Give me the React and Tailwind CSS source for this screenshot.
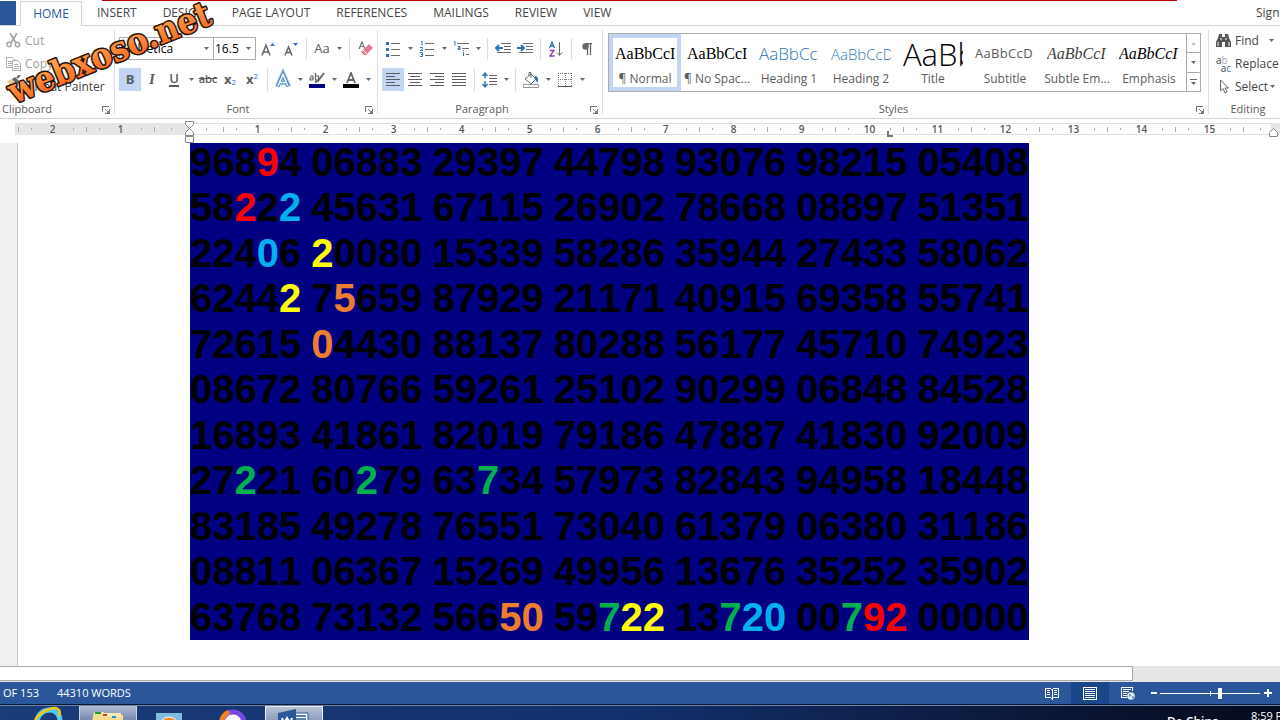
import { useState } from "react";

const tabs = ["INSERT", "DESIGN", "PAGE LAYOUT", "REFERENCES", "MAILINGS", "REVIEW", "VIEW"]

const colors = {
  r: "text-[#ff0000]",
  b: "text-[#00b0f0]",
  y: "text-[#ffff00]",
  o: "text-[#ed7d31]",
  g: "text-[#00b050]",
}

// marks: "group.digit" -> color key
const lines = [
  { text: "96894 06883 29397 44798 93076 98215 05408", marks: { "0.3": "r" } },
  { text: "58222 45631 67115 26902 78668 08897 51351", marks: { "0.2": "r", "0.4": "b" } },
  { text: "22406 20080 15339 58286 35944 27433 58062", marks: { "0.3": "b", "1.0": "y" } },
  { text: "62442 75659 87929 21171 40915 69358 55741", marks: { "0.4": "y", "1.1": "o" } },
  { text: "72615 04430 88137 80288 56177 45710 74923", marks: { "1.0": "o" } },
  { text: "08672 80766 59261 25102 90299 06848 84528", marks: {} },
  { text: "16893 41861 82019 79186 47887 41830 92009", marks: {} },
  { text: "27221 60279 63734 57973 82843 94958 18448", marks: { "0.2": "g", "1.2": "g", "2.2": "g" } },
  { text: "83185 49278 76551 73040 61379 06380 31186", marks: {} },
  { text: "08811 06367 15269 49956 13676 35252 35902", marks: {} },
  {
    text: "63768 73132 56650 59722 13720 00792 00000",
    marks: {
      "2.3": "o", "2.4": "o", "3.2": "g", "3.3": "y", "3.4": "y",
      "4.2": "g", "4.3": "b", "4.4": "b", "5.2": "g", "5.3": "r", "5.4": "r"
    }
  },
]

const styleItems = [
  { name: "¶ Normal", sample: "AaBbCcI", look: "font-['Liberation_Serif',serif] text-[16px] text-black" },
  { name: "¶ No Spac...", sample: "AaBbCcI", look: "font-['Liberation_Serif',serif] text-[16px] text-black" },
  { name: "Heading 1", sample: "AaBbCc", look: "font-['Open_Sans',sans-serif] font-light text-[17px] text-[#2e74b5]" },
  { name: "Heading 2", sample: "AaBbCcD", look: "font-['Open_Sans',sans-serif] font-light text-[15px] text-[#2e74b5]" },
  { name: "Title", sample: "AaBb", look: "font-['Open_Sans',sans-serif] font-light text-[31px] leading-8 text-black" },
  { name: "Subtitle", sample: "AaBbCcD", look: "font-['Open_Sans',sans-serif] tracking-wide text-[13px] text-[#5a5a5a]" },
  { name: "Subtle Em...", sample: "AaBbCcI", look: "font-['Liberation_Serif',serif] italic text-[16px] text-[#404040]" },
  { name: "Emphasis", sample: "AaBbCcI", look: "font-['Liberation_Serif',serif] italic text-[16px] text-black" },
]

function Caret({ className = "" }) {
  return (
    <svg viewBox="0 0 7 4" className={`h-[3px] w-[5px] shrink-0 ${className}`} fill="#6a6a6a">
      <path d="M0 0h7L3.5 4z" />
    </svg>
  )
}

function Tool({ label, className = "w-[22px]", children }) {
  return (
    <button type="button" aria-label={label} className={`flex h-[23px] shrink-0 items-center justify-center ${className}`}>
      {children}
    </button>
  )
}

function Drop({ label }) {
  return <Tool label={label} className="w-3"><Caret /></Tool>
}

function Divider({ className = "mx-1" }) {
  return <div className={`h-[22px] w-px shrink-0 bg-[#dcdcdc] ${className}`} />
}

function Group({ title, launcher, className = "", children }) {
  return (
    <section className={`relative mt-1 mb-1 flex shrink-0 flex-col border-r border-[#dcdcdc] ${className}`}>
      <div className="flex-1">{children}</div>
      <div className="flex h-[10px] items-center justify-center text-[11px] text-[#5c5c5c]">{title}</div>
      {launcher && (
        <button type="button" aria-label={`${title} settings`} className="absolute right-1 bottom-0">
          <svg viewBox="0 0 8 8" className="size-2" fill="none" stroke="#777" shapeRendering="crispEdges">
            <path d="M.5 6V.5H7M3 3l3 3M7.5 3v4.5H3" />
            <path d="M5 7h2V5z" fill="#777" />
          </svg>
        </button>
      )}
    </section>
  )
}

function Lines({ rows }) {
  return (
    <svg viewBox="0 0 14 13" className="h-[13px] w-[14px]" stroke="#5c5c5c" shapeRendering="crispEdges">
      {rows.map(([a, b], i) => <path key={i} d={`M${a} ${i * 3 - 0.5 + 1}H${b}`} />)}
    </svg>
  )
}

function Clipboard() {
  return (
    <Group title={<span className="mr-auto ml-0.5">Clipboard</span>} launcher className="w-[115px]">
      <div className="-mt-px flex flex-col text-xs">
        <button type="button" className="flex h-[23px] items-center gap-1 pl-1.5 text-[#a0a0a0]">
          <svg viewBox="0 0 15 15" className="size-[15px]" fill="none" stroke="#a6a6a6" strokeWidth="1.8">
            <path d="M4 0l6 10M11 0L5 10" />
            <circle cx="3" cy="11.5" r="2.2" strokeWidth="1.4" />
            <circle cx="11.5" cy="11.5" r="2.2" strokeWidth="1.4" />
          </svg>
          Cut
        </button>
        <button type="button" className="flex h-[23px] items-center gap-1 pl-1.5 text-[#a0a0a0]">
          <svg viewBox="0 0 15 14" className="h-[14px] w-[15px]" fill="#fff" stroke="#b4aeb4" shapeRendering="crispEdges">
            <path d="M.5.5h6l2 2v8h-8zM2 4.5h4M2 6.5h4M2 8.5h4" />
            <path d="M6.500 3.500h5l3 3v7h-8zM8 7.500h4M8 9.500h5M8 11.500h5" />
          </svg>
          Copy
        </button>
        <button type="button" className="flex h-[23px] items-center gap-1 pl-1.5 text-[#444]">
          <svg viewBox="0 0 15 15" className="size-[15px] -translate-y-1">
            <path d="M1 6l5-2 4 5-4 4z" fill="#efc882" />
            <path d="M6 4l3-2 5 5-3 3z" fill="#666" />
            <path d="M11 3l3-3" stroke="#666" strokeWidth="2" />
          </svg>
          <span className="-ml-1 whitespace-nowrap">Format Painter</span>
        </button>
      </div>
    </Group>
  )
}

function FontGroup() {
  return (
    <Group title="Font" launcher className="w-[263px] pr-4">
      <div className="flex flex-col gap-2 pt-[7px] pl-1 text-[#5c5c5c]">
        <div className="flex items-center">
          <div className="relative flex items-center">
            <select aria-label="Font" className="h-[23px] w-[95px] appearance-none border border-[#ababab] bg-white pl-0.5 text-xs text-black">
              <option>Helvetica</option>
            </select>
            <Caret className="pointer-events-none absolute right-[5px]" />
          </div>
          <div className="relative -ml-px flex items-center">
            <select aria-label="Font size" className="h-[23px] w-[43px] appearance-none border border-[#ababab] bg-white pl-px text-xs text-black">
              <option>16.5</option>
            </select>
            <Caret className="pointer-events-none absolute right-[5px]" />
          </div>
          <Tool label="Grow font" className="w-6">
            <svg viewBox="0 0 14 14" className="size-[14px]" fill="none" stroke="#666" strokeWidth="1.5">
              <path d="M1 13.500L5 3l4 10.500M2.500 10h5" />
              <path d="M9 4l2.500-3L14 4z" fill="#2e74b5" stroke="none" />
            </svg>
          </Tool>
          <Tool label="Shrink font">
            <svg viewBox="0 0 14 14" className="size-[14px]" fill="none" stroke="#666" strokeWidth="1.5">
              <path d="M1 13.500L4.500 5 8 13.500M2.500 10.500h4" />
              <path d="M9 1l2.500 3L14 1z" fill="#2e74b5" stroke="none" />
            </svg>
          </Tool>
          <Divider />
          <Tool label="Change case"><span className="text-[13px]">Aa</span></Tool>
          <Drop label="Change case options" />
          <Divider />
          <Tool label="Clear formatting">
            <svg viewBox="0 0 15 15" className="size-[15px]">
              <path d="M1 8L4 1l3 7M2 5.500h4" stroke="#777" strokeWidth="1.200" fill="none" />
              <path d="M3 11l8-8 4 4-7 7H6z" fill="#e8798f" />
              <path d="M5 9l4 4" stroke="#fff" />
            </svg>
          </Tool>
        </div>
        <div className="flex items-center text-[13px]">
          <Tool label="Bold" className="w-[22px] bg-[#c2d5f2]"><b>B</b></Tool>
          <Tool label="Italic"><span className="font-['Liberation_Serif',serif] text-[15px] font-bold italic">I</span></Tool>
          <Tool label="Underline"><span className="border-b-2 border-[#5c5c5c] leading-[13px] font-semibold">U</span></Tool>
          <Drop label="Underline options" />
          <Tool label="Strikethrough"><span className="text-[11px] font-semibold line-through">abc</span></Tool>
          <Tool label="Subscript"><b>x</b><sub className="text-[8px] text-[#2e74b5]">2</sub></Tool>
          <Tool label="Superscript"><b>x</b><sup className="text-[8px] text-[#2e74b5]">2</sup></Tool>
          <Divider />
          <Tool label="Text effects">
            <svg viewBox="0 0 14 14" className="size-[14px] overflow-visible" fill="none">
              <path d="M1.500 13.500L7 1l5.500 12.500M4 9.500h6" stroke="#b9d3ef" strokeWidth="5.500" />
              <path d="M1.500 13.500L7 1l5.500 12.500M4 9.500h6" stroke="#4a86c4" strokeWidth="3.500" />
              <path d="M2 13L7 1.500 12 13M4 9.500h6" stroke="#fff" strokeWidth="1.500" />
            </svg>
          </Tool>
          <Drop label="Text effects options" />
          <Tool label="Highlight">
            <svg viewBox="0 0 16 16" className="size-4" fill="none" stroke="#666">
              <path d="M1 4h3v4H1V6h3M6.500 1v7h3V4h-3" strokeWidth="1.200" />
              <path d="M15 1L9 9l-3 1" strokeWidth="2" />
              <path d="M0 12h16v4H0z" fill="#000080" stroke="none" />
            </svg>
          </Tool>
          <Drop label="Highlight options" />
          <Tool label="Font color">
            <svg viewBox="0 0 16 16" className="size-4" fill="none" stroke="#666" strokeWidth="1.800">
              <path d="M4 11L8 1l4 10M5 8h6" />
              <path d="M0 12h16v4H0z" fill="#000" stroke="none" />
            </svg>
          </Tool>
          <Drop label="Font color options" />
        </div>
      </div>
    </Group>
  )
}

function ListIcon({ kind }) {
  return (
    <svg viewBox="0 0 15 16" className="h-4 w-[15px]" fill="none" stroke="#6a6a6a">
      <path d="M5 2.500h9M5 8.500h9M5 14.500h9" shapeRendering="crispEdges" />
      {kind === "dots" && <path d="M0 1h3v3H0zM0 7h3v3H0zM0 13h3v3H0z" fill="#2e74b5" stroke="none" />}
      {kind === "numbers" && <path d="M1 .5h1v4M0 6.500h2.500v1.500L.5 9.500h2.500M0 11.500h2.500v4H0M1 13.500h2" stroke="#2e74b5" />}
    </svg>
  )
}

function ParagraphGroup() {
  return (
    <Group title="Paragraph" launcher className="w-[225px] pr-4">
      <div className="flex flex-col gap-2 pt-[7px] pl-1">
        <div className="flex items-center">
          <Tool label="Bullets"><ListIcon kind="dots" /></Tool>
          <Drop label="Bullet options" />
          <Tool label="Numbering"><ListIcon kind="numbers" /></Tool>
          <Drop label="Numbering options" />
          <Tool label="Multilevel list">
            <svg viewBox="0 0 17 16" className="h-4 w-[17px]" fill="none" stroke="#6a6a6a">
              <path d="M4 2.500h12M9 7.500h7M13 13.500h3" shapeRendering="crispEdges" />
              <path d="M1 .5h1v4M5 5.500h2v3H5v-1.500h2M10.500 9v1M10.500 11v4" stroke="#2e74b5" />
            </svg>
          </Tool>
          <Drop label="Multilevel options" />
          <Divider className="mr-1 ml-[3px]" />
          <Tool label="Decrease indent">
            <svg viewBox="0 0 16 12" className="h-3 w-4" fill="none" stroke="#6a6a6a">
              <path d="M6 .5h10M9 3.500h7M9 6.500h7M2 9.500h14" shapeRendering="crispEdges" />
              <path d="M8 5H2M4 2L1 5l3 3" stroke="#2e74b5" strokeWidth="2" />
            </svg>
          </Tool>
          <Tool label="Increase indent">
            <svg viewBox="0 0 16 12" className="h-3 w-4" fill="none" stroke="#6a6a6a">
              <path d="M6 .5h10M9 3.500h7M9 6.500h7M2 9.500h14" shapeRendering="crispEdges" />
              <path d="M0 5h6M4 2l3 3-3 3" stroke="#2e74b5" strokeWidth="2" />
            </svg>
          </Tool>
          <Divider />
          <Tool label="Sort">
            <svg viewBox="0 0 14 16" className="h-4 w-[14px]" fill="none">
              <path d="M.5 7L3 1l2.500 6M1.500 5h3" stroke="#2e74b5" strokeWidth="1.300" />
              <path d="M1 9.500h4L1 15h4.500" stroke="#8c3fb0" strokeWidth="1.300" />
              <path d="M10.500 1v13M8 11.500l2.500 3 2.500-3" stroke="#666" />
            </svg>
          </Tool>
          <Divider />
          <Tool label="Show marks">
            <svg viewBox="0 0 10 12" className="h-3 w-[10px]">
              <path d="M4 .500h6M5.500 0v12M8.500 0v12" stroke="#666" strokeWidth="1.300" />
              <circle cx="3.500" cy="3.500" r="3.200" fill="#666" />
            </svg>
          </Tool>
        </div>
        <div className="flex items-center">
          <Tool label="Align left" className="w-[22px] bg-[#c2d5f2]"><Lines rows={[[0, 14], [0, 9], [0, 14], [0, 9], [0, 14]]} /></Tool>
          <Tool label="Center"><Lines rows={[[0, 14], [2, 12], [0, 14], [2, 12], [0, 14]]} /></Tool>
          <Tool label="Align right"><Lines rows={[[0, 14], [5, 14], [0, 14], [5, 14], [0, 14]]} /></Tool>
          <Tool label="Justify"><Lines rows={[[0, 14], [0, 14], [0, 14], [0, 14], [0, 14]]} /></Tool>
          <Divider className="mr-[3px] ml-1" />
          <Tool label="Line spacing">
            <svg viewBox="0 0 15 16" className="h-4 w-[15px]" fill="none">
              <path d="M3 1v5.500M3 9v6M.5 4L3 1.200 5.500 4M.5 12L3 14.800 5.500 12" stroke="#2e74b5" strokeWidth="1.500" />
              <path d="M7 3.500h8M7 6.500h8M7 9.500h8M7 12.500h8" stroke="#6a6a6a" shapeRendering="crispEdges" />
            </svg>
          </Tool>
          <Drop label="Line spacing options" />
          <Divider className="mr-1 ml-[3px]" />
          <Tool label="Shading">
            <svg viewBox="0 0 16 16" className="size-4" fill="none" stroke="#666">
              <path d="M2 7l6-5 5 5-5 5zM6 4V.5h2V6" />
              <path d="M12 4c3 0 4 3 2.500 7-1-1-1-3-3-4z" fill="#2e74b5" stroke="none" />
              <path d="M.5 12.500h15v3H.5z" fill="#fff" stroke="#999" />
            </svg>
          </Tool>
          <Drop label="Shading options" />
          <Tool label="Borders">
            <svg viewBox="0 0 14 14" className="size-[14px]" fill="none" stroke="#777" shapeRendering="crispEdges">
              <path d="M.5 0v13M13.500 0v13M7.500 0v13M0 .5h14M0 6.500h14" strokeDasharray="1 1" />
              <path d="M0 13.500h14" stroke="#555" />
            </svg>
          </Tool>
          <Drop label="Border options" />
        </div>
      </div>
    </Group>
  )
}

function StylesGroup() {
  const [active, setActive] = useState("¶ Normal")
  return (
    <Group title="Styles" launcher className="w-[606px] pr-6">
      <div className="ml-[5px] mt-[3px] flex h-[59px] w-[593px] border border-[#ababab]">
        {styleItems.map((item) => (
          <button
            key={item.name}
            type="button"
            onClick={() => setActive(item.name)}
            className={`flex w-[72px] shrink-0 flex-col items-center border-4 ${active === item.name ? "border-[#c2d5f2]" : "border-transparent"}`}
          >
            <span className={`mb-px flex h-8 w-[60px] items-center overflow-hidden whitespace-nowrap ${item.look}`}>{item.sample}</span>
            <span className="text-[12px] leading-4 whitespace-nowrap text-[#5c5c5c]">{item.name}</span>
          </button>
        ))}
        <div className="ml-auto flex w-[14px] flex-col divide-y divide-[#ababab] border-l border-[#ababab]">
          <button type="button" aria-label="Previous styles" className="flex flex-1 items-center justify-center"><Caret className="rotate-180 opacity-40" /></button>
          <button type="button" aria-label="Next styles" className="flex flex-1 items-center justify-center"><Caret /></button>
          <button type="button" aria-label="All styles" className="flex flex-1 flex-col items-center justify-center gap-0.5">
            <span className="h-px w-[7px] bg-[#6a6a6a]" />
            <Caret />
          </button>
        </div>
      </div>
    </Group>
  )
}

function EditingGroup() {
  return (
    <Group title="Editing" className="w-[78px] border-r-0">
      <div className="-mt-px flex flex-col pl-[7px] text-xs text-[#444]">
        <button type="button" className="flex h-[23px] items-center gap-1">
          <svg viewBox="0 0 15 13" className="h-[13px] w-[15px]" fill="#555">
            <path d="M3 0h3v3h3V0h3l1 4 2 4v5H9V8H6v5H0V8l2-4z" />
            <path d="M2 8v4M13 8v4M5 4v2M10 4v2" stroke="#fff" />
          </svg>
          Find
          <Caret className="ml-1.5" />
        </button>
        <button type="button" className="flex h-[23px] items-center gap-1 whitespace-nowrap">
          <span className="flex h-4 w-[15px] shrink-0 flex-col text-[10px] leading-[8px]">
            <span className="self-start">a<span className="text-[#aaa]">b</span></span>
            <span className="self-end">a<span className="text-[#2e74b5]">c</span></span>
          </span>
          Replace
        </button>
        <button type="button" className="flex h-[23px] items-center gap-1">
          <svg viewBox="0 0 15 15" className="size-[15px] shrink-0" fill="#fff" stroke="#666">
            <path d="M4.500 1v11l2.500-2.500 2 4.500 2-1-2-4h3.500z" />
          </svg>
          Select
          <Caret className="-ml-0.5" />
        </button>
      </div>
    </Group>
  )
}

function RulerCell({ n }) {
  return (
    <div className="flex w-[68px] shrink-0 items-center justify-between">
      <i className="h-[5px] w-px bg-[#aaa]" />
      <i className="h-0.5 w-px bg-[#aaa]" />
      <span className="w-4 text-center">{n}</span>
      <i className="h-0.5 w-px bg-[#aaa]" />
      <i />
    </div>
  )
}

function Ruler() {
  return (
    <div className="relative flex h-6 shrink-0 items-start bg-white pt-1 pl-[15px] text-[10px] font-semibold text-[#555]">
      <div className="flex h-3 w-[174px] shrink-0 items-center bg-[#e6e6e6] pl-[3px]">
        <RulerCell n={2} />
        <RulerCell n={1} />
        <div className="flex w-[18px] items-center justify-between">
          <i className="h-[5px] w-px bg-[#aaa]" />
          <i className="h-0.5 w-px bg-[#aaa]" />
        </div>
      </div>
      <div className="flex h-3 min-w-0 flex-1 items-center overflow-hidden border-y border-[#e1e1e1]">
        <div className="flex w-[34px] shrink-0 justify-center"><i className="h-0.5 w-px bg-[#aaa]" /></div>
        {Array.from({ length: 15 }, (_, i) => <RulerCell key={i} n={i + 1} />)}
        <i className="h-[5px] w-px shrink-0 bg-[#aaa]" />
        <i className="ml-4 h-0.5 w-px shrink-0 bg-[#aaa]" />
      </div>
      <div className="h-3 w-[9px] shrink-0 bg-[#e6e6e6]" />
      <svg viewBox="0 0 9 22" className="absolute top-0.5 left-[185px] h-[22px] w-[9px]" fill="#fff" stroke="#888">
        <path d="M.5.500h8v3l-4 4 4 4v3h-8v-3l4-4-4-4zM.5 15.500h8v6h-8z" />
      </svg>
      <svg viewBox="0 0 6 6" className="absolute top-3 left-[887px] size-1.5" fill="#777">
        <path d="M0 0h2v4h4v2H0z" />
      </svg>
      <svg viewBox="0 0 9 9" className="absolute top-[9px] right-[2px] size-[9px]" fill="#fff" stroke="#888">
        <path d="M.5 8.500V4.500l4-4 4 4v4z" />
      </svg>
    </div>
  )
}

function NumberLine({ text, marks }) {
  return (
    <p className="flex gap-[10px] odd:leading-[46px] even:leading-[45px]">
      {text.split(" ").map((group, g) => (
        <span key={g}>
          {group.split("").map((digit, d) => {
            const mark = marks[`${g}.${d}`]
            return mark ? <span key={d} className={colors[mark]}>{digit}</span> : digit
          })}
        </span>
      ))}
    </p>
  )
}

function Document() {
  return (
    <main className="flex min-h-0 flex-1 items-start overflow-hidden bg-white">
      <div className="w-[18px] shrink-0 self-stretch border-r border-[#c6c6c6] bg-[#f0f0f0]" />
      <div className="ml-[172px] shrink-0 overflow-hidden bg-[#000080]">
        <div className="-mt-1 font-['Liberation_Sans',sans-serif] text-[40px] font-bold text-black [font-kerning:none]">
          {lines.map((line) => <NumberLine key={line.text} {...line} />)}
        </div>
      </div>
    </main>
  )
}

function StatusBar() {
  const [zoom, setZoom] = useState(120)
  return (
    <footer className="flex h-[22px] shrink-0 items-center bg-[#2b579a] text-[11px] text-white">
      <span className="ml-[3px]">OF 153</span>
      <span className="ml-[18px]">44310 WORDS</span>
      <div className="ml-auto flex h-full items-center">
        <button type="button" aria-label="Read mode" className="flex h-full w-[38px] items-center justify-center">
          <svg viewBox="0 0 14 13" className="h-[13px] w-[14px]" fill="none" stroke="#fff" shapeRendering="crispEdges">
            <path d="M.5 1.500h5l1.500 1 1.500-1h5v9h-5l-1.500 1-1.500-1h-5zM7 2v11M2 3.500h3M2 5.500h3M2 7.500h3M9 3.500h3M9 5.500h3M9 7.500h3" />
          </svg>
        </button>
        <button type="button" aria-label="Print layout" className="flex h-full w-[38px] items-center justify-center bg-[#19478a]">
          <svg viewBox="0 0 14 13" className="h-[13px] w-[14px]" fill="none" stroke="#fff" shapeRendering="crispEdges">
            <path d="M.5.500h13v12H.5zM2 2.500h10M2 4.500h10M2 6.500h10M2 8.500h10M2 10.500h10" />
          </svg>
        </button>
        <button type="button" aria-label="Web layout" className="flex h-full w-[38px] items-center justify-center">
          <svg viewBox="0 0 14 13" className="h-[13px] w-[14px]" fill="none" stroke="#fff">
            <path d="M6 10.500H.5V.500h11V4M2 2.500h8M2 4.500h6M2 6.500h4M2 8.500h4" shapeRendering="crispEdges" />
            <circle cx="10" cy="9" r="3.800" fill="#dfe8f5" stroke="none" />
            <path d="M8 7l2 1-1 2zM11 9l2 1-1 2z" fill="#2b579a" stroke="none" />
          </svg>
        </button>
        <button type="button" aria-label="Zoom out" className="ml-1 flex h-4 w-[9px] items-center"><span className="h-0.5 w-1.5 bg-white" /></button>
        <div className="relative flex h-4 items-center pr-1">
          <i className="absolute left-[50px] h-[5px] w-px bg-white" />
          <input
            type="range"
            aria-label="Zoom"
            min="0"
            max="200"
            value={zoom}
            onChange={(e) => setZoom(Number(e.target.value))}
            className="h-px w-[100px] appearance-none bg-white [&::-webkit-slider-thumb]:h-[11px] [&::-webkit-slider-thumb]:w-1 [&::-webkit-slider-thumb]:appearance-none [&::-webkit-slider-thumb]:bg-white"
          />
        </div>
        <button type="button" aria-label="Zoom in" className="mr-2 flex size-2">
          <svg viewBox="0 0 8 8" className="size-2" stroke="#fff" strokeWidth="2"><path d="M0 4h8M4 0v8" /></svg>
        </button>
      </div>
    </footer>
  )
}

function Taskbar() {
  return (
    <nav className="flex h-4 shrink-0 overflow-hidden border-t border-[#0c1830] bg-linear-to-r from-[#1a3c78] via-[#12306c] to-[#060a1c] text-white">
      <div className="flex h-[15px] w-full items-start border-t border-[#6b83ad]">
        <button type="button" aria-label="Internet Explorer" className="ml-[33px] w-[46px]">
          <svg viewBox="0 0 30 14" className="h-[14px] w-[30px]" fill="none">
            <path d="M4 15C6 6 12 4 17 4s10 4 10 11" stroke="#55c8f0" strokeWidth="5" />
            <path d="M2 14C8 5 20 0 25 3c2 1 2 4 1 7" stroke="#f2c714" strokeWidth="2.500" />
          </svg>
        </button>
        <button type="button" aria-label="File Explorer" className="flex h-[14px] w-[58px] justify-center border-x border-[#c9d2e2] bg-linear-to-b from-[#b4bfd6] to-[#7587ad]">
          <svg viewBox="0 0 32 14" className="h-[14px] w-8">
            <path d="M2 6h10l1 3h18v6H0z" fill="#f5dd8d" />
            <path d="M3 6h6v2H3z" fill="#20a040" />
            <path d="M12 7h17v4H12z" fill="#f8eab5" />
            <path d="M11 8h4v2h-4z" fill="#d04020" />
            <path d="M20 10h4v2h-4z" fill="#2090e0" />
          </svg>
        </button>
        <button type="button" aria-label="Media player" className="ml-[19px] w-7">
          <svg viewBox="0 0 28 14" className="h-[14px] w-7">
            <path d="M0 7h26v8H0z" fill="#7fbce0" />
            <circle cx="13" cy="20" r="9" fill="#f08a28" stroke="#fff" />
          </svg>
        </button>
        <button type="button" aria-label="Browser" className="ml-[33px] w-8">
          <svg viewBox="0 0 32 14" className="h-[14px] w-8" fill="none" strokeWidth="5">
            <circle cx="16" cy="17" r="11" fill="#fff" stroke="#7a48e8" />
            <path d="M4.500 17A11.500 11.500 0 0 1 12 6.200" stroke="#f58220" />
          </svg>
        </button>
        <button type="button" aria-label="Word" className="ml-4 flex h-[14px] w-[58px] justify-center border border-b-0 border-[#e9edf4] bg-linear-to-b from-[#b9c2d4] to-[#8e9dbb]">
          <svg viewBox="0 0 32 14" className="h-[14px] w-8">
            <path d="M16 6h14v11H16z" fill="#fff" stroke="#2b579a" />
            <path d="M18 9h10M18 12h10" stroke="#2b579a" strokeWidth="1.500" />
            <path d="M0 6l18-4v14H0z" fill="#2b579a" />
            <path d="M4 11l2 5 3-5 3 5 2-5" stroke="#fff" strokeWidth="2" fill="none" />
          </svg>
        </button>
        <span className="ml-auto h-[14px] w-[84px] overflow-hidden pt-2 font-['Open_Sans',sans-serif] text-xs leading-4 font-semibold">De China</span>
        <time className="w-[29px] shrink-0 overflow-hidden pt-1 text-[11px] leading-3 whitespace-nowrap">8:59 PM</time>
      </div>
    </nav>
  )
}

function Logo() {
  return (
    <svg viewBox="0 0 230 120" className="pointer-events-none absolute top-0 left-0 h-[120px] w-[230px]">
      <defs>
        <linearGradient id="flame" x1="0" y1="0" x2="0" y2="1">
          <stop offset="0.3" stopColor="#ff9a45" />
          <stop offset="0.85" stopColor="#fb6a20" />
        </linearGradient>
      </defs>
      <text
        x="0"
        y="0"
        transform="translate(14 104) rotate(-22)"
        fill="url(#flame)"
        stroke="#20140c"
        strokeWidth="3"
        strokeLinejoin="round"
        paintOrder="stroke"
        className="font-['DejaVu_Serif_Condensed','DejaVu_Serif',serif] text-[35px] font-bold"
      >
        webxoso.net
      </text>
    </svg>
  )
}

export default function App() {
  return (
    <div className="relative flex h-screen flex-col overflow-hidden bg-white font-['Open_Sans',sans-serif]">
      <header className="relative flex h-[26px] shrink-0 items-stretch border-b border-[#d5d5d5] text-xs text-[#444]">
        <div className="absolute top-0 right-[103px] left-[102px] h-px bg-[#c00000]" />
        <button type="button" aria-label="File" className="mt-px w-4 bg-[#2b579a]" />
        <button type="button" className="mt-px -mb-px ml-1 w-[62px] border border-b-0 border-[#d5d5d5] bg-white text-[#2b579a]">HOME</button>
        <div className="flex pt-px pl-0.5">
          {tabs.map((tab) => (
            <button key={tab} type="button" className="px-[13px] whitespace-nowrap">{tab}</button>
          ))}
        </div>
        <a href="#signin" className="ml-auto w-6 self-center overflow-hidden whitespace-nowrap">Sign in</a>
      </header>
      <div className="flex h-[93px] shrink-0 overflow-hidden border-b border-[#d5d5d5]">
        <Clipboard />
        <FontGroup />
        <ParagraphGroup />
        <StylesGroup />
        <EditingGroup />
      </div>
      <Ruler />
      <Document />
      <div className="flex h-4 shrink-0 bg-[#e6e6e6]">
        <div className="mr-[147px] mb-px flex-1 border border-l-0 border-[#ababab] bg-white" />
      </div>
      <StatusBar />
      <Taskbar />
      <Logo />
    </div>
  )
}
